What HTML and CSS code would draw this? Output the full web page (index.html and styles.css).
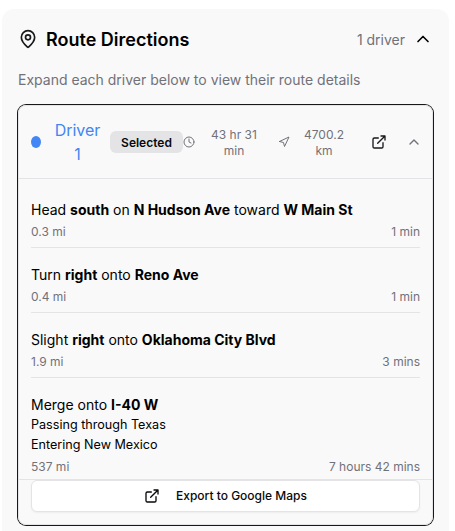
FILE: index.html
```html
<!DOCTYPE html>
<html lang="en">
<head>
<meta charset="utf-8">
<title>Route Directions</title>
<link rel="stylesheet" href="styles.css">
</head>
<body>
<section class="card">
  <header class="card-head">
    <svg class="icon pin" viewBox="0 0 24 24"><path d="M20 10c0 4.993-5.539 10.193-7.399 11.799a1 1 0 0 1-1.202 0C9.539 20.193 4 14.993 4 10a8 8 0 0 1 16 0"/><circle cx="12" cy="10" r="3"/></svg>
    <h1>Route Directions</h1>
    <span class="count">1 driver</span>
    <svg class="icon toggle" viewBox="0 0 24 24"><path d="m18 15-6-6-6 6"/></svg>
  </header>
  <p class="hint">Expand each driver below to view their route details</p>
  <article class="driver">
    <div class="driver-head">
      <span class="dot"></span>
      <span class="name">Driver 1</span>
      <span class="badge">Selected</span>
      <svg class="icon clock" viewBox="0 0 24 24"><circle cx="12" cy="12" r="10"/><path d="M12 6v6l4 2"/></svg>
      <span class="time">43 hr 31 min</span>
      <svg class="icon nav" viewBox="0 0 24 24"><path d="M3 11 22 2 13 21 11 13 3 11"/></svg>
      <span class="distance">4700.2 km</span>
      <svg class="icon open" viewBox="0 0 24 24"><path d="M15 3h6v6M10 14 21 3M18 13v6a2 2 0 0 1-2 2H5a2 2 0 0 1-2-2V8a2 2 0 0 1 2-2h6"/></svg>
      <svg class="icon collapse" viewBox="0 0 24 24"><path d="m18 15-6-6-6 6"/></svg>
    </div>
    <div class="steps">
      <div class="step">
        <p>Head <b>south</b> on <b>N Hudson Ave</b> toward <b>W Main St</b></p>
        <div class="meta"><span>0.3 mi</span><span>1 min</span></div>
      </div>
      <div class="step">
        <p>Turn <b>right</b> onto <b>Reno Ave</b></p>
        <div class="meta"><span>0.4 mi</span><span>1 min</span></div>
      </div>
      <div class="step">
        <p>Slight <b>right</b> onto <b>Oklahoma City Blvd</b></p>
        <div class="meta"><span>1.9 mi</span><span>3 mins</span></div>
      </div>
      <div class="step">
        <p>Merge onto <b>I-40 W</b></p>
        <div class="note">Passing through Texas</div>
        <div class="note">Entering New Mexico</div>
        <div class="meta"><span>537 mi</span><span>7 hours 42 mins</span></div>
      </div>
    </div>
    <footer class="driver-foot">
      <button class="export" type="button">
        <svg class="icon" viewBox="0 0 24 24"><path d="M15 3h6v6M10 14 21 3M18 13v6a2 2 0 0 1-2 2H5a2 2 0 0 1-2-2V8a2 2 0 0 1 2-2h6"/></svg>
        Export to Google Maps
      </button>
    </footer>
  </article>
</section>
</body>
</html>
```
FILE: styles.css
```css
* { box-sizing: border-box; }
body {
  margin: 0;
  height: 531px;
  overflow: hidden;
  background: #fff;
  color: #000;
  font-family: Inter, "Liberation Sans", sans-serif;
  font-size: 14px;
  line-height: 20px;
}
h1, p { margin: 0; }
b { font-weight: 700; }
.icon {
  flex: none;
  width: 16px;
  height: 16px;
  fill: none;
  stroke: currentColor;
  stroke-width: 2;
  stroke-linecap: round;
  stroke-linejoin: round;
}
.card {
  width: 447px;
  height: 540px;
  margin: 9px 0 0 2px;
  padding: 16px;
  border-radius: 12px;
  background: #f9f9f9;
}
.card-head { display: flex; align-items: center; height: 28px; }
.pin { width: 20px; height: 20px; color: #18181b; }
.card-head h1 { margin-left: 8px; padding-top: 2px; font-size: 18px; line-height: 28px; font-weight: 600; }
.count { margin-left: auto; padding-top: 2px; color: #71717a; }
.toggle { width: 20px; height: 20px; margin-left: 8px; }
.hint { margin-top: 17px; color: #71717a; }
.driver {
  width: 415px;
  height: 420px;
  margin-top: 15px;
  border: 1px solid #e4e4e7;
  border-radius: 8px;
  box-shadow: 0 0 0 1px #18181b;
}
.driver-head {
  display: flex;
  align-items: center;
  height: 73px;
  padding: 0 12px;
  border-bottom: 1px solid #e4e4e7;
  color: #71717a;
  text-align: center;
}
.driver-head > * { flex: none; }
.dot { width: 10px; height: 12px; border-radius: 50%; background: #4285f4; }
.name { width: 49px; margin-left: 12px; color: #4285f4; font-size: 16px; line-height: 24px; }
.badge {
  width: 73px;
  height: 22px;
  margin-left: 8px;
  border-radius: 6px;
  background: #e4e4e7;
  color: #09090b;
  font-size: 12px;
  line-height: 24px;
  font-weight: 600;
}
.clock, .nav { width: 12px; height: 12px; }
.time, .distance { padding-top: 2px; font-size: 12px; line-height: 16px; }
.time { width: 50px; margin-left: 14px; }
.nav { margin-left: 19px; }
.distance { width: 42px; margin-left: 13px; }
.open { margin-left: 26px; color: #18181b; }
.collapse { margin-left: 19px; }
.steps { height: 301px; padding: 21px 12px 0; border-bottom: 1px solid #e4e4e7; }
.step { padding-bottom: 7px; margin-bottom: 17px; border-bottom: 1px solid #e4e4e7; }
.step:last-child { border: 0; margin: 0; padding: 0; }
.note { font-size: 12.6px; line-height: 20px; }
.meta { display: flex; justify-content: space-between; margin-top: 4px; color: #71717a; font-size: 12px; line-height: 16px; }
.driver-foot { padding: 0 12px; }
.export {
  display: flex;
  align-items: center;
  justify-content: center;
  gap: 16px;
  width: 100%;
  height: 32px;
  border: 1px solid #e4e4e7;
  border-radius: 6px;
  background: #fff;
  box-shadow: 0 1px 2px rgb(0 0 0 / 5%);
  color: #09090b;
  font: 500 12px/16px Inter, "Liberation Sans", sans-serif;
}
```
